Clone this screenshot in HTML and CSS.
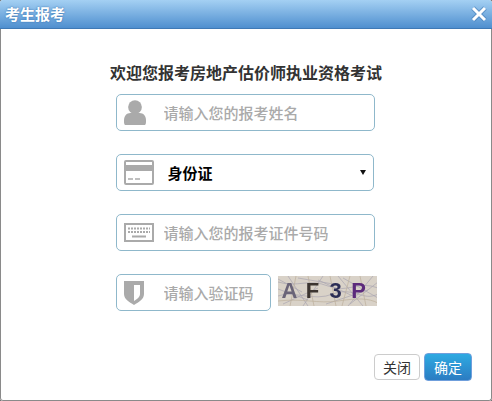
FILE: index.html
```html
<!DOCTYPE html>
<html lang="zh">
<head>
<meta charset="utf-8">
<title>考生报考</title>
<link rel="stylesheet" href="styles.css">
</head>
<body>
<div class="dialog">
  <header class="titlebar">
    <span class="title">考生报考</span>
    <svg class="close" width="18" height="18" viewBox="0 0 18 18"><path d="M3 3L15 15M15 3L3 15" stroke="#3f78b4" stroke-width="5" fill="none" opacity=".55"/><path d="M3 3L15 15M15 3L3 15" stroke="#fff" stroke-width="3" fill="none"/></svg>
  </header>
  <div class="panel">
  <main class="content">
    <h1 class="heading">欢迎您报考房地产估价师执业资格考试</h1>
    <form class="form">
      <label class="field">
        <span class="icon-box"><svg class="icon" width="22" height="26" viewBox="0 0 24 28"><circle cx="12" cy="7.500" r="7.500" fill="#aaa"/><path d="M1 27c-1-1-1-2-1-5 0-5 3-8 7-8h10c4 0 7 3 7 8 0 3 0 4-1 5z" fill="#aaa"/></svg></span>
        <input class="input" type="text" placeholder="请输入您的报考姓名">
      </label>
      <label class="field select-field">
        <span class="icon-box"><svg class="icon" width="30" height="25" viewBox="0 0 30 25"><rect x="1" y="1" width="28" height="23" rx="1" fill="#fff" stroke="#aaa" stroke-width="2"/><rect x="1" y="5" width="28" height="6" fill="#aaa"/><path d="M4 19h5M11 19h5" stroke="#aaa" stroke-width="1.500"/></svg></span>
        <select class="select"><option>身份证</option></select>
      </label>
      <label class="field">
        <span class="icon-box"><svg class="icon" width="30" height="19" viewBox="0 0 30 19"><rect x="1" y="1" width="28" height="17" fill="#fff" stroke="#aaa" stroke-width="2"/><path d="M4 5.500h22M4 9h22" stroke="#aaa" stroke-width="2" stroke-dasharray="2 1"/><path d="M8 13.500h14" stroke="#aaa" stroke-width="2"/></svg></span>
        <input class="input" type="text" placeholder="请输入您的报考证件号码">
      </label>
      <div class="captcha-row">
        <label class="field field-short">
          <span class="icon-box"><svg class="icon" width="20" height="24" viewBox="0 0 20 24"><path d="M0 0h20v13c0 5-5 8-10 11C5 21 0 18 0 13z" fill="#aaa"/><path d="M10 4h6v9c0 3-3 5-6 7z" fill="#fff"/></svg></span>
          <input class="input" type="text" placeholder="请输入验证码">
        </label>
        <div class="captcha">
          <svg class="noise" width="100" height="30" viewBox="0 0 100 30"><path d="M0 6C20 12 30 2 50 10S80 4 100 12M0 20C15 14 35 26 55 18S85 26 100 18M10 0L30 30M45 0L25 30M60 0L85 30M95 0L70 30M0 13L30 24M40 4L75 20M72 28L100 6M0 3L24 16M20 2L55 8M65 2L100 22M5 28L40 12M48 28L90 14" stroke="#aaa6b2" stroke-width=".7" fill="none"/><path d="M0 25C25 22 40 28 60 25S90 22 100 27M18 0L12 30M52 0L58 30M82 0L88 30M30 0L36 30M72 0L64 30" stroke="#bdb09c" stroke-width=".7" fill="none"/></svg>
          <span class="ch ch-a">A</span><span class="ch ch-f">F</span><span class="ch ch-3">3</span><span class="ch ch-p">P</span>
        </div>
      </div>
    </form>
  </main>
  <footer class="actions">
    <button class="btn btn-close" type="button">关闭</button>
    <button class="btn btn-ok" type="button">确定</button>
  </footer>
  </div>
</div>
</body>
</html>
```
FILE: styles.css
```css
* { box-sizing: border-box; }
html, body { margin: 0; padding: 0; background: #666; }
body { width: 492px; height: 401px; overflow: hidden; font-family: "Noto Sans CJK SC", "Liberation Sans", sans-serif; }
.dialog { width: 492px; height: 401px; display: flex; flex-direction: column; background: #fff; border-radius: 3px; overflow: hidden; }
.titlebar { height: 29px; flex: none; display: flex; align-items: center; justify-content: space-between; padding: 0 4px 1px 5px; background: linear-gradient(#a4d0f3, #4f8fcf); border-bottom: 1px solid #3f79b5; }
.title { color: #fff; font-size: 15px; line-height: 20px; font-weight: 700; text-shadow: 0 0 2px #2f6aa8; }
.close { display: block; }
.panel { flex: 1; min-height: 0; display: flex; flex-direction: column; border: 1px solid #8a8a8a; border-top: 0; border-bottom-left-radius: 3px; border-bottom-right-radius: 3px; }
.content { flex: 1; display: flex; flex-direction: column; align-items: center; }
.heading { margin: 32px 0 0; font-size: 16px; line-height: 22px; font-weight: 700; color: #333; white-space: nowrap; }
.form { width: 262px; margin: 11px 0 0 -1px; padding-left: 1px; display: flex; flex-direction: column; gap: 23px; }
.field { width: 259px; height: 37px; display: flex; align-items: center; border: 1px solid #8fb8cb; border-radius: 5px; background: #fff; }
.icon-box { flex: none; width: 47px; padding-left: 7px; }
.icon { display: block; }
.field .input { flex: 1; min-width: 0; border: 0; outline: 0; background: transparent; padding: 0; font: 500 15px/20px "Noto Sans CJK SC", sans-serif; color: #333; }
.input::placeholder { color: #aaa; opacity: 1; }
.select-field { width: 258px; position: relative; }
.select-field::after { content: ""; position: absolute; right: 7px; top: 15px; border: 3px solid transparent; border-top: 5px solid #111; border-bottom: 0; }
.select { flex: 1; min-width: 0; border: 0; outline: 0; appearance: none; background: transparent; padding: 0 0 0 4px; font: 700 15px/20px "Noto Sans CJK SC", sans-serif; color: #000; }
.captcha-row { display: flex; align-items: flex-start; gap: 7px; }
.field-short { width: 155px; }
.captcha { position: relative; width: 100px; height: 30px; margin-top: 2px; background: #d9d2c8; overflow: hidden; display: grid; grid-template-columns: 16px 16px 16px 16px; column-gap: 7px; padding-left: 4px; align-items: center; }
.noise { position: absolute; left: 0; top: 0; }
.ch { position: relative; font: 700 22px/30px "Liberation Sans", sans-serif; text-align: center; filter: blur(.4px); }
.ch-a { color: #6a6478; }
.ch-f { color: #3b3430; }
.ch-3 { color: #2b2d55; }
.ch-p { color: #5c2a7c; }
.actions { flex: none; display: flex; justify-content: flex-end; align-items: center; gap: 4px; padding: 0 19px 19px 0; }
.btn { padding: 0; font: 14px/20px "Noto Sans CJK SC", sans-serif; border-radius: 4px; cursor: pointer; }
.btn-close { width: 46px; height: 26px; background: #fff; border: 1px solid #ccc; color: #333; }
.btn-ok { width: 48px; height: 28px; background: linear-gradient(#2eaae2, #2b7cc2); border: 1px solid #6f9fdc; color: #fff; }
```
